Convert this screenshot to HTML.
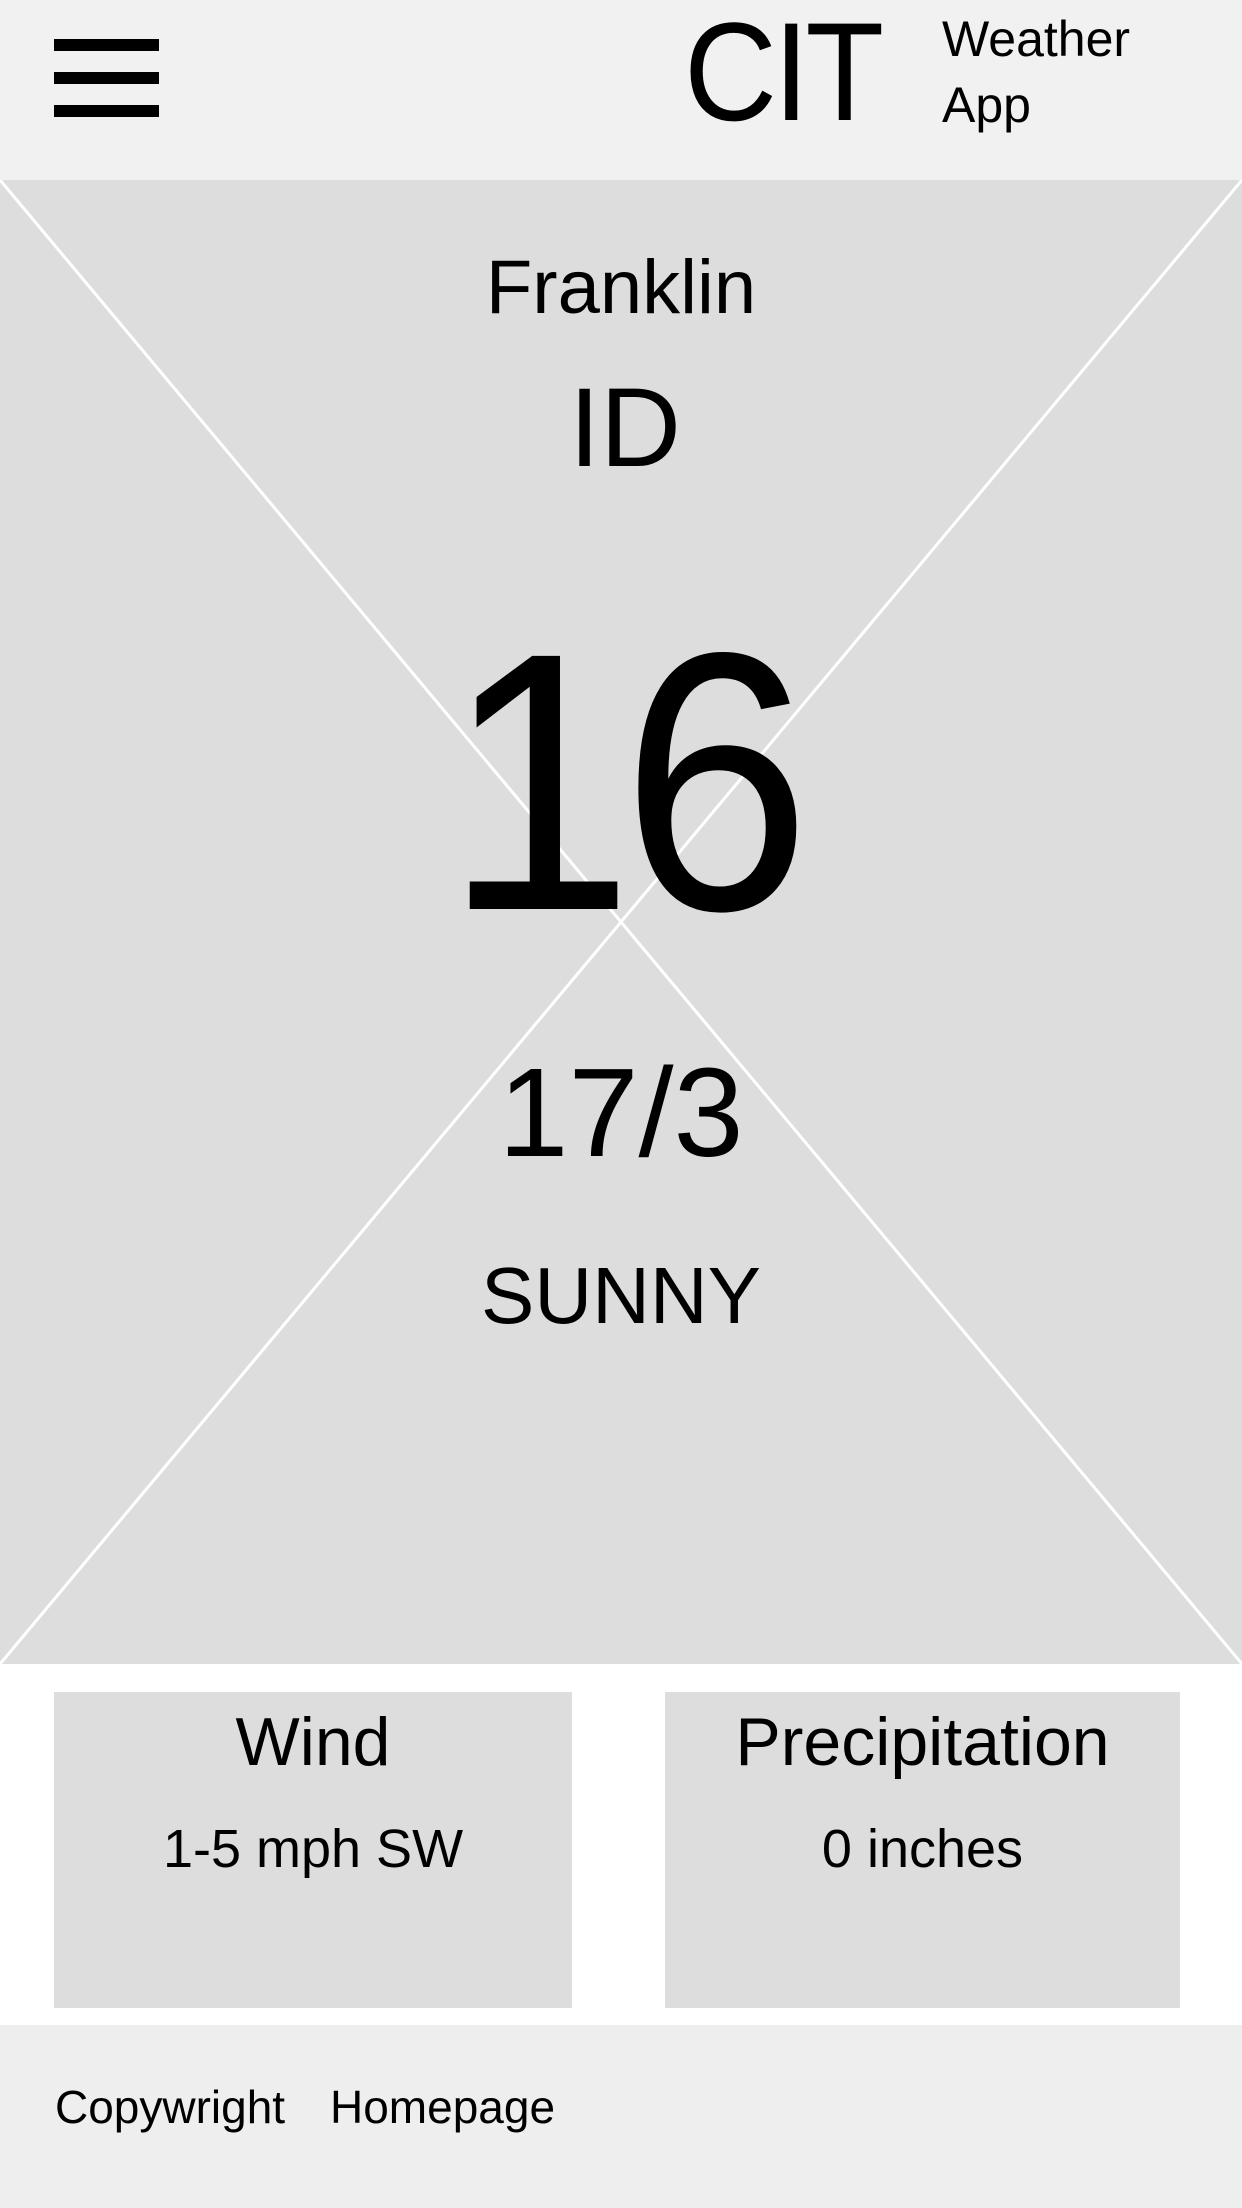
<!DOCTYPE html>
<html><head><meta charset="utf-8"><style>
*{margin:0;padding:0;box-sizing:border-box}
body{width:1242px;height:2208px;background:#fff;font-family:"Liberation Sans",sans-serif;color:#000;position:relative;overflow:hidden}
.abs{position:absolute}
.c{position:absolute;left:0;width:1242px;text-align:center;line-height:1}
</style></head><body>
<div class="abs" style="left:0;top:0;width:1242px;height:180px;background:#f1f1f1"></div>
<div class="abs" style="left:54px;top:39px;width:105px;height:12px;background:#000"></div>
<div class="abs" style="left:54px;top:72px;width:105px;height:12px;background:#000"></div>
<div class="abs" style="left:54px;top:105px;width:105px;height:12px;background:#000"></div>
<div class="abs" style="left:684px;top:2px;font-size:140px;line-height:1;letter-spacing:-4px;transform:scaleX(0.92);transform-origin:left">CIT</div>
<div class="abs" style="left:942px;top:6px;font-size:50px;line-height:66px">Weather<br>App</div>
<div class="abs" style="left:0;top:180px;width:1242px;height:1484px;background:#dddddd"></div>
<svg class="abs" style="left:0;top:180px" width="1242" height="1484"><line x1="0" y1="0" x2="1242" y2="1484" stroke="#fff" stroke-width="3"/><line x1="1242" y1="0" x2="0" y2="1484" stroke="#fff" stroke-width="3"/></svg>
<div class="c" style="top:250px;font-size:76px">Franklin</div>
<div class="c" style="top:372px;font-size:112px;left:4px">ID</div>
<div class="c" style="top:598px;font-size:368px;letter-spacing:-14px;transform:scaleX(0.93)">16</div>
<div class="c" style="top:1050px;font-size:126px">17/3</div>
<div class="c" style="top:1256px;font-size:80px">SUNNY</div>
<div class="abs" style="left:54px;top:1692px;width:518px;height:316px;background:#dddddd;text-align:center">
<div style="font-size:68px;margin-top:16px;line-height:1">Wind</div>
<div style="font-size:54px;margin-top:46px;line-height:1">1-5 mph SW</div></div>
<div class="abs" style="left:665px;top:1692px;width:515px;height:316px;background:#dddddd;text-align:center">
<div style="font-size:68px;margin-top:16px;line-height:1">Precipitation</div>
<div style="font-size:54px;margin-top:46px;line-height:1">0 inches</div></div>
<div class="abs" style="left:0;top:2025px;width:1242px;height:183px;background:#eeeeee"></div>
<div class="abs" style="left:55px;top:2084px;font-size:46px;line-height:1">Copywright</div>
<div class="abs" style="left:330px;top:2084px;font-size:46px;line-height:1">Homepage</div>
</body></html>
